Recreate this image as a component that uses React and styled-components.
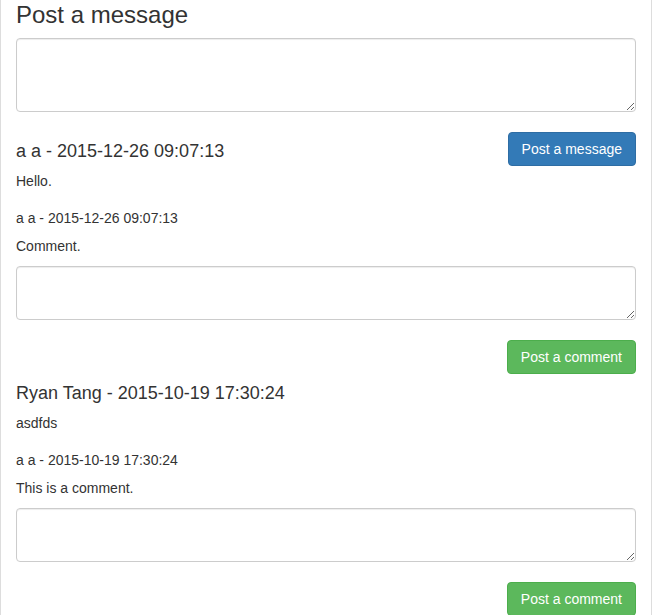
import React from "react";
import styled, { createGlobalStyle } from "styled-components";

const GlobalStyle = createGlobalStyle`
  html, body {
    margin: 0;
    padding: 0;
    background: #fff;
  }
  body {
    font-family: "Liberation Sans", Arial, Helvetica, sans-serif;
    font-size: 14px;
    line-height: 20px;
    color: #333;
  }
  *, *::before, *::after {
    box-sizing: border-box;
  }
`;

const Page = styled.div`
  width: 652px;
  min-height: 100vh;
  padding: 2px 15px 0;
  border-left: 1px solid #ddd;
  border-right: 1px solid #ddd;
  background: #fff;
`;

const Title = styled.h3`
  margin: 0 0 10px;
  font-size: 24px;
  font-weight: 500;
  line-height: 26px;
  color: #333;
`;

const TextArea = styled.textarea`
  display: block;
  width: 100%;
  height: ${(p) => p.$height}px;
  margin: ${(p) => p.$top || 0}px 0 0;
  padding: 6px 12px;
  font: inherit;
  color: #555;
  background: #fff;
  border: 1px solid #ccc;
  border-radius: 4px;
  box-shadow: inset 0 1px 1px rgba(0, 0, 0, 0.075);
  resize: vertical;
  outline: none;
`;

const Post = styled.section`
  margin-top: ${(p) => p.$top}px;
`;

const PostHeader = styled.div`
  display: flex;
  justify-content: space-between;
  align-items: flex-start;
`;

const PostTitle = styled.h4`
  margin: 9px 0 10px;
  font-size: 18px;
  font-weight: 500;
  line-height: 20px;
  color: #333;
`;

const Text = styled.p`
  margin: ${(p) => p.$top || 0}px 0 0;
  font-size: 14px;
  line-height: 20px;
`;

const ActionRow = styled.div`
  display: flex;
  justify-content: flex-end;
  margin-top: 20px;
`;

const variants = {
  primary: { bg: "#337ab7", border: "#2e6da4" },
  success: { bg: "#5cb85c", border: "#4cae4c" },
};

const Button = styled.button`
  display: inline-block;
  height: 34px;
  padding: 6px 13px;
  font-family: inherit;
  font-size: 14px;
  line-height: 20px;
  color: #fff;
  background: ${(p) => variants[p.$variant].bg};
  border: 1px solid ${(p) => variants[p.$variant].border};
  border-radius: 4px;
  white-space: nowrap;
  cursor: pointer;
`;

const posts = [
  {
    title: "a a - 2015-12-26 09:07:13",
    body: "Hello.",
    meta: "a a - 2015-12-26 09:07:13",
    comment: "Comment.",
    top: 20,
    withSubmit: true,
  },
  {
    title: "Ryan Tang - 2015-10-19 17:30:24",
    body: "asdfds",
    meta: "a a - 2015-10-19 17:30:24",
    comment: "This is a comment.",
    top: 0,
    withSubmit: false,
  },
];

export default function App() {
  return (
    <>
      <GlobalStyle />
      <Page>
        <Title>Post a message</Title>
        <TextArea $height={74} rows={3} />
        {posts.map((p, i) => (
          <Post key={i} $top={p.top}>
            <PostHeader>
              <PostTitle>{p.title}</PostTitle>
              {p.withSubmit && <Button $variant="primary">Post a message</Button>}
            </PostHeader>
            <Text>{p.body}</Text>
            <Text $top={17}>{p.meta}</Text>
            <Text $top={8}>{p.comment}</Text>
            <TextArea $height={54} $top={10} rows={2} />
            <ActionRow>
              <Button $variant="success">Post a comment</Button>
            </ActionRow>
          </Post>
        ))}
      </Page>
    </>
  );
}
